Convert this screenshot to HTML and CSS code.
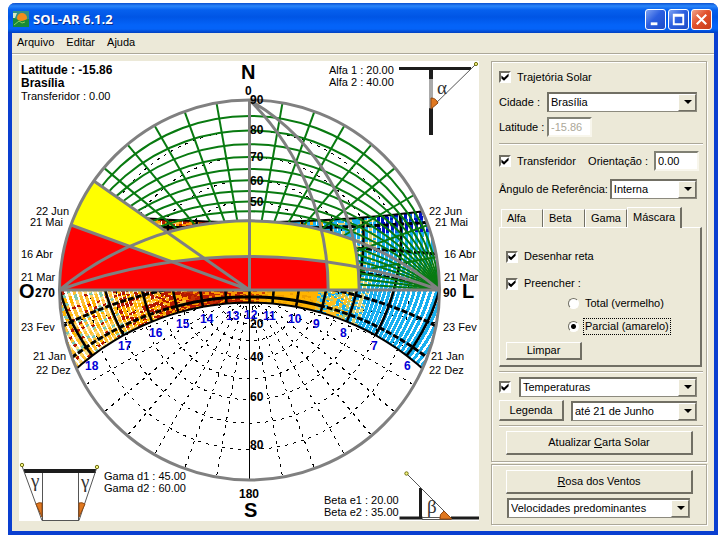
FILE: index.html
```html
<!DOCTYPE html>
<html lang="pt-BR">
<head>
<meta charset="utf-8">
<title>SOL-AR 6.1.2</title>
<link rel="stylesheet" href="styles.css">
</head>
<body>
<div class="window">
  <header class="titlebar">
    <svg class="app-icon" viewBox="0 0 16 16" aria-hidden="true">
      <rect width="16" height="16" fill="#2f8f86"/>
      <path d="M0 2h4l-2 5H0z" fill="#d8e8c0"/>
      <circle cx="9" cy="7" r="5" fill="#f08c1c"/>
      <path d="M0 7c4 0 5 3 8 3s5-2 8-2v8H0z" fill="#188a38"/>
      <path d="M1 14l5-4 3 2 3-1" stroke="#8ad060" fill="none"/>
    </svg>
    <h1>SOL-AR 6.1.2</h1>
    <div class="window-buttons">
      <button type="button" class="win-btn" aria-label="Minimizar"><svg viewBox="0 0 20 20"><path d="M5 13h7v3H5z" fill="#fff"/></svg></button>
      <button type="button" class="win-btn" aria-label="Maximizar"><svg viewBox="0 0 20 20"><path d="M4 4h12v12H4zM6 7v7h8V7z" fill="#fff" fill-rule="evenodd"/></svg></button>
      <button type="button" class="win-btn close" aria-label="Fechar"><svg viewBox="0 0 20 20"><path d="M5 5l10 10M15 5L5 15" stroke="#fff" stroke-width="2.2"/></svg></button>
    </div>
  </header>
  <nav class="menubar">
    <button type="button">Arquivo</button>
    <button type="button">Editar</button>
    <button type="button">Ajuda</button>
  </nav>
  <main class="content">
    <svg class="chart" viewBox="19 61 460 460" role="img" aria-label="Carta solar de Brasília">
      <defs>
        <clipPath id="disc"><circle cx="249.5" cy="290" r="190"/></clipPath>
        <clipPath id="upper"><path d="M59.5 290A190 190 0 0 1 439.5 290z"/></clipPath>
        <clipPath id="gamma60"><circle cx="139.8" cy="290" r="219.4"/></clipPath>
        <clipPath id="gamma45"><circle cx="59.5" cy="290" r="268.7"/></clipPath>
      </defs>
      <rect x="19" y="61" width="460" height="460" fill="#fff"/>
      <g id="polar-grid" class="polar-grid" clip-path="url(#disc)"></g>
      <g id="temperatures" clip-path="url(#disc)"></g>
      <g id="sun-paths" class="sun-paths" clip-path="url(#disc)"></g>
      <g id="protractor" class="protractor" clip-path="url(#upper)"></g>
      <g fill="#ff0">
        <path d="M59.5 290A295.6 295.6 0 0 1 439.5 290z" clip-path="url(#gamma60)"/>
        <path d="M249.5 290H59.5A190 190 0 0 1 93.9 181z"/>
      </g>
      <g fill="#f00">
        <path d="M59.5 290A555.5 555.5 0 0 1 439.5 290z" clip-path="url(#gamma45)"/>
        <path d="M249.5 290H59.5A190 190 0 0 1 71 225z"/>
      </g>
      <path d="M249.5 290V480" stroke="#000"/>
      <g class="guides">
        <path d="M59.5 290A295.6 295.6 0 0 1 439.5 290M59.5 290A555.5 555.5 0 0 1 439.5 290"/>
        <path d="M249.5 100A219.4 219.4 0 0 1 359.2 290M249.5 100A268.7 268.7 0 0 1 328.2 290"/>
        <path d="M249.5 290L93.9 181M249.5 290L71 225M59.5 290H439.5M249.5 100V290"/>
        <circle cx="249.5" cy="290" r="190"/>
      </g>
      <g class="scale">
        <text x="250" y="104">90</text><text x="250" y="134">80</text><text x="250" y="161">70</text>
        <text x="250" y="185">60</text><text x="250" y="206">50</text>
        <text x="250" y="328">20</text><text x="250" y="361">40</text><text x="250" y="401">60</text><text x="250" y="449">80</text>
        <text x="245" y="95">0</text><text x="239" y="498">180</text>
        <text x="35" y="297">270</text><text x="443" y="297">90</text>
      </g>
      <g class="cardinal">
        <text x="241" y="79">N</text><text x="244" y="517">S</text><text x="19" y="298">O</text><text x="462" y="298">L</text>
      </g>
      <g class="hours">
        <text x="85" y="370">18</text><text x="118" y="350">17</text><text x="149" y="337">16</text><text x="176" y="328">15</text>
        <text x="200" y="323">14</text><text x="226" y="320">13</text><text x="244" y="319">12</text><text x="263" y="320">11</text>
        <text x="288" y="323">10</text><text x="313" y="328">9</text><text x="340" y="337">8</text><text x="371" y="350">7</text><text x="404" y="370">6</text>
      </g>
      <g class="note">
        <text x="36" y="215">22 Jun</text><text x="30" y="226">21 Mai</text><text x="21" y="258">16 Abr</text><text x="21" y="281">21 Mar</text>
        <text x="21" y="331">23 Fev</text><text x="33" y="360">21 Jan</text><text x="36" y="374">22 Dez</text>
        <text x="429" y="215">22 Jun</text><text x="435" y="226">21 Mai</text><text x="444" y="258">16 Abr</text><text x="444" y="281">21 Mar</text>
        <text x="443" y="331">23 Fev</text><text x="431" y="360">21 Jan</text><text x="429" y="374">22 Dez</text>
        <text x="21" y="100">Transferidor : 0.00</text>
        <text x="329" y="74">Alfa 1 : 20.00</text><text x="329" y="86">Alfa 2 : 40.00</text>
        <text x="104" y="480">Gama d1 : 45.00</text><text x="104" y="492">Gama d2 : 60.00</text>
        <text x="324" y="504">Beta e1 : 20.00</text><text x="324" y="516">Beta e2 : 35.00</text>
      </g>
      <g class="heading"><text x="21" y="74">Latitude : -15.86</text><text x="21" y="87">Brasília</text></g>
      <g class="diagram">
        <path class="slab" d="M399 67h72v3h-72zM429 68h4v11h-4zM429 108h4v27h-4z"/>
        <path class="wire" d="M430 79v30M432 79v30M431 108L475 65"/>
        <path class="angle" d="M431 98q5 0 7 5l-7 6z"/>
        <circle class="sun" cx="476" cy="64" r="1.6"/>
        <text x="437" y="94">α</text>
      </g>
      <g class="diagram">
        <path class="slab" d="M24 469h72v4H24z"/>
        <path class="wire" d="M22 466L42 520.5H79L97 467M42.5 473v47M78.5 473v47"/>
        <path class="angle" d="M36 504q3-2 6-1v14zM79 503q3-1 6 1l-6 13z"/>
        <circle class="sun" cx="22" cy="465" r="1.7"/><circle class="sun" cx="97" cy="467" r="1.7"/>
        <text x="31" y="487">γ</text><text x="81" y="488">γ</text>
      </g>
      <g class="diagram">
        <path class="slab" d="M399.5 516.5h23v3h-23zM451 516.5h28v3h-28zM419 488h3v31h-3z"/>
        <path class="wire" d="M422 517.5h29M422 519.5h29M407 474L452 519"/>
        <path class="angle" d="M440 519q-1-5 4-8l8 8z"/>
        <circle class="sun" cx="406.5" cy="473.5" r="1.7"/>
        <text x="427" y="513">β</text>
      </g>
    </svg>

    <form class="panel">
      <section class="group">
        <label class="row check-row"><input type="checkbox" checked> Trajetória Solar</label>
        <div class="row city-row">
          <label class="caption" for="city">Cidade :</label>
          <span class="combo grow"><select id="city"><option>Brasília</option></select></span>
        </div>
        <div class="row">
          <label class="caption" for="lat">Latitude :</label>
          <input class="field" id="lat" type="text" value="-15.86" disabled>
        </div>
        <hr>
        <div class="row spread">
          <label class="check-row"><input type="checkbox" checked> Transferidor</label>
          <span class="pair"><label for="ori">Orientação :</label><input class="field" id="ori" type="text" value="0.00"></span>
        </div>
        <div class="row angle-row">
          <label for="ref">Ângulo de Referência:</label>
          <span class="combo grow"><select id="ref"><option>Interna</option></select></span>
        </div>
        <div class="tabs" role="tablist">
          <button type="button" role="tab">Alfa</button>
          <button type="button" role="tab">Beta</button>
          <button type="button" role="tab">Gama</button>
          <button type="button" role="tab" aria-selected="true" class="active">Máscara</button>
        </div>
        <div class="tab-page" role="tabpanel">
          <label class="check-row"><input type="checkbox" checked> Desenhar reta</label>
          <label class="check-row"><input type="checkbox" checked> Preencher :</label>
          <div class="options">
            <label><input type="radio" name="fill"><span>Total (vermelho)</span></label>
            <label><input type="radio" name="fill" checked><span class="focused">Parcial (amarelo)</span></label>
          </div>
          <button type="button" class="btn small">Limpar</button>
        </div>
        <hr class="tight">
        <div class="row temp-row">
          <input type="checkbox" id="temp-on" aria-label="Mostrar dados" checked>
          <span class="combo grow"><select aria-label="Dados"><option>Temperaturas</option></select></span>
        </div>
        <div class="row legend-row">
          <button type="button" class="btn legend">Legenda</button>
          <span class="combo grow"><select aria-label="Período"><option>até 21 de Junho</option></select></span>
        </div>
        <hr class="tight">
        <button type="button" class="btn wide">Atualizar <u>C</u>arta Solar</button>
      </section>
      <section class="group">
        <button type="button" class="btn wide"><u>R</u>osa dos Ventos</button>
        <span class="combo wind"><select aria-label="Ventos"><option>Velocidades predominantes</option></select></span>
      </section>
    </form>
  </main>
</div>
<script src="chart.js"></script>
</body>
</html>
```
FILE: styles.css
```css
* { box-sizing: border-box; }
body {
  margin: 0;
  padding: 3px 7px 4px 8px;
  background: #fff;
  color: #000;
  font: 11px/13px "Liberation Sans", Arial, sans-serif;
}
button, input, select { font: inherit; color: inherit; margin: 0; padding: 0; border-radius: 0; }
.window {
  background: #ece9d8;
  border: solid #0a3fd0;
  border-width: 0 4px 4px;
  border-radius: 7px 7px 0 0;
}
.titlebar {
  display: flex;
  align-items: center;
  gap: 4px;
  height: 30px;
  margin: 0 -4px;
  padding: 2px 6px 0 5px;
  border-radius: 7px 7px 0 0;
  background: linear-gradient(#0a50d0 0, #2a86fa 3px, #0660ee 7px, #0055e5 14px, #0463f8 22px, #0463f8 26px, #0140c0 30px);
}
.app-icon { width: 16px; height: 16px; }
h1 {
  flex: 1;
  margin: 0;
  color: #fff;
  font: bold 13px/16px "Open Sans", sans-serif;
  text-shadow: 1px 1px #0a2c8c;
}
.window-buttons { display: flex; gap: 2px; }
.win-btn {
  width: 21px;
  height: 21px;
  border: 1px solid #fff;
  border-radius: 3px;
  background: linear-gradient(135deg, #7ea2f2, #2c5fe0 45%, #1c4cc8);
}
.win-btn svg { display: block; width: 100%; height: 100%; }
.close { background: linear-gradient(135deg, #f0a48c, #e2512c 45%, #c83c18); }
.menubar {
  display: flex;
  gap: 12px;
  height: 21px;
  padding: 0 5px 2px;
  border-bottom: 1px solid #aca899;
  box-shadow: 0 1px #fff;
}
.menubar button { border: 0; background: none; }
.content {
  display: flex;
  align-items: flex-start;
  gap: 12px;
  padding: 7px 7px 6px;
}
.chart { flex: 1; min-width: 0; display: block; }

/* Chart */
.polar-grid { fill: none; stroke: #000; stroke-width: 1; stroke-dasharray: 3 5; shape-rendering: crispEdges; }
.sun-paths { fill: none; stroke: #000; stroke-width: 2; }
.sun-paths .day { stroke-width: 3; stroke-dasharray: 6 2; }
.sun-paths .noon-side { stroke-dasharray: none; }
.sun-paths .edge { stroke-width: 2; stroke-dasharray: none; }
.protractor { fill: none; stroke: #087a10; stroke-width: 2; }
.guides { fill: none; stroke: #808080; stroke-width: 3; }
.scale { font-size: 12px; font-weight: bold; }
.cardinal { font-size: 20px; font-weight: bold; }
.hours { font-size: 12px; font-weight: bold; fill: #0000d8; }
.note { font-size: 11px; }
.heading { font-size: 12px; font-weight: bold; }
.slab { fill: #1c1c1c; }
.wire { fill: none; stroke: #555; stroke-width: 1; }
.angle { fill: #e07820; stroke: #904810; stroke-width: 1; }
.sun { fill: #f4f480; stroke: #707010; stroke-width: 1; }
.diagram text { font: 19px "Liberation Serif", serif; fill: #333; }

/* Side panel */
.panel { width: 216px; flex: none; }
.group {
  border: 1px solid #aca899;
  box-shadow: inset 1px 1px #fff, 1px 1px #fff;
  padding: 5px 7px 6px;
}
.group + .group { margin-top: 2px; }
.row { display: flex; align-items: center; min-height: 20px; margin-bottom: 5px; }
.check-row { display: flex; align-items: center; gap: 6px; }
.city-row { padding-right: 2px; margin-top: 3px; }
.caption { width: 48px; }
.grow { flex: 1; }
.spread { justify-content: space-between; margin-top: 6px; }
.pair { display: flex; align-items: center; gap: 6px; }
.angle-row { gap: 2px; padding-right: 2px; margin-top: 8px; }
hr {
  height: 2px;
  margin: 6px -4px 0 0;
  border: 0;
  border-top: 1px solid #aca899;
  border-bottom: 1px solid #fff;
}
hr.tight { margin: 4px -4px 4px 0; }
input[type="checkbox"] {
  appearance: none;
  flex: none;
  width: 12px;
  height: 12px;
  background: #fff;
  border: 2px solid;
  border-color: #716f64 #fff #fff #716f64;
}
input[type="checkbox"]:checked::before {
  content: "";
  display: block;
  width: 8px;
  height: 8px;
  background: #000;
  clip-path: polygon(5% 30%, 38% 60%, 95% 5%, 95% 42%, 38% 98%, 5% 68%);
}
.field {
  width: 45px;
  height: 20px;
  padding: 0 2px;
  background: #fff;
  border: 2px solid;
  border-color: #808074 #f8f6ec #f8f6ec #808074;
}
.field:disabled { color: #aca899; }
.combo {
  display: flex;
  position: relative;
  height: 20px;
  background: #fff;
  border: 2px solid;
  border-color: #716f64 #8c8a7e #8c8a7e #716f64;
  border-right-width: 1px;
  border-bottom-width: 1px;
}
.combo select {
  appearance: none;
  flex: 1;
  min-width: 0;
  border: 0;
  background: none;
  padding: 0 17px 0 2px;
}
.combo::before {
  content: "";
  position: absolute;
  inset: 0 0 0 auto;
  width: 16px;
  background: #ece9d8;
  border: 1px solid;
  border-color: #fff #716f64 #716f64 #fff;
}
.combo::after {
  content: "";
  position: absolute;
  right: 4px;
  top: 6px;
  border: 4px solid transparent;
  border-top-color: #000;
  border-bottom: 0;
}
.tabs { display: flex; align-items: flex-end; height: 20px; margin: 8px 0 0 2px; }
.tabs button {
  height: 18px;
  padding: 0 9px 0 5px;
  width: 42px;
  text-align: left;
  background: none;
  border: solid;
  border-width: 1px 1px 0;
  border-color: #fff #716f64 #fff #fff;
}
.tabs .active {
  position: relative;
  z-index: 1;
  width: 55px;
  height: 21px;
  margin-bottom: -1px;
  padding: 0 5px 2px;
  background: #ece9d8;
  border-right-width: 2px;
}
.tab-page {
  display: flex;
  flex-direction: column;
  gap: 14px;
  margin-right: -3px;
  min-height: 140px;
  padding: 22px 6px 5px;
  border: solid;
  border-width: 1px 2px 2px 1px;
  border-color: #fff #716f64 #716f64 #fff;
}
.options { display: flex; flex-direction: column; gap: 8px; margin: -8px 0 0 62px; }
.options label { display: flex; align-items: center; gap: 5px; }
.options span { padding: 1px; }
.options .focused { outline: 1px dotted #000; }
input[type="radio"] {
  appearance: none;
  flex: none;
  width: 11px;
  height: 11px;
  border-radius: 50%;
  background: #fff;
  border: 1px solid;
  border-color: #716f64 #fff #fff #716f64;
}
input[type="radio"]:checked { background: radial-gradient(circle, #000 2px, #fff 3px); }
.btn {
  background: #ece9d8;
  border: solid;
  border-width: 1px 2px 2px 1px;
  border-color: #fff #716f64 #716f64 #fff;
}
.small { width: 76px; height: 18px; margin-top: -6px; flex: none; }
.temp-row { gap: 8px; padding-right: 2px; margin-bottom: 3px; }
.legend-row { gap: 7px; padding-right: 2px; margin-bottom: 0; }
.legend { width: 65px; height: 21px; }
.wide { display: block; width: calc(100% - 13px); height: 24px; margin-left: 7px; }
.wind { margin: 4px 9px 0 8px; }
```
FILE: chart.js
```js
// Stereographic sun chart: horizon radius R around the zenith (CX, CY).
const CX = 249.5, CY = 290, R = 190, RAD = Math.PI / 180;
const LAT = -15.86 * RAD, TILT = 23.45;

function addPath(parent, d, attrs) {
  const el = document.createElementNS("http://www.w3.org/2000/svg", "path");
  el.setAttribute("d", d);
  for (const key in attrs || {}) el.setAttribute(key, attrs[key]);
  document.getElementById(parent).appendChild(el);
}

// Screen point of the sun for an hour angle and declination in degrees.
function sun(hour, dec) {
  const h = hour * RAD, d = dec * RAD;
  const up = Math.sin(LAT) * Math.sin(d) + Math.cos(LAT) * Math.cos(d) * Math.cos(h);
  const north = Math.cos(LAT) * Math.sin(d) - Math.sin(LAT) * Math.cos(d) * Math.cos(h);
  const east = -Math.cos(d) * Math.sin(h);
  return (CX + R * east / (1 + up)).toFixed(1) + " " + (CY - R * north / (1 + up)).toFixed(1);
}

for (let z = 10; z < 90; z += 10) {
  const r = R * Math.tan(z * RAD / 2);
  addPath("polar-grid", `M${CX - r} ${CY}a${r} ${r} 0 0 1 ${2 * r} 0a${r} ${r} 0 0 1 ${-2 * r} 0`);
}
for (let a = 10; a < 360; a += 10) {
  if (a % 90) {
    const s = Math.sin(a * RAD), c = Math.cos(a * RAD);
    addPath("polar-grid", `M${CX + 17 * s} ${CY - 17 * c}L${CX + R * s} ${CY - R * c}`);
    if (c > 0) addPath("protractor", `M${CX} ${CY}L${CX + R * s} ${CY - R * c}`);
  }
}
for (let a = 5; a < 90; a += 5) {
  const r = R / Math.sin(a * RAD);
  addPath("protractor", `M${CX - R} ${CY}A${r} ${r} 0 0 1 ${CX + R} ${CY}`);
}

// Temperature cells: the palette depends on the time of day and the season.
let seed = 7;
function random() {
  seed = (seed * 16807) % 2147483647;
  return seed / 2147483647;
}
function palette(h, dec) {
  if (h > 72) return ["#b41800", "#ffc030", "#ffe080", "#ffd060", "#ffb400", "#ffc030", "#80c8a8"];
  if (h > 55) return ["#b41800", "#ffb400", "#ffd060", "#b41800", "#ffb400"];
  if (h > 40) return ["#b41800", "#ffa800", "#ffa800", "#b41800", "#ffc040"];
  if (h > 5) return ["#b41800", "#b41800", "#c83000", "#ff9800"];
  if (h > -10) return ["#d04000", "#ffa800", "#ffa800"];
  if (h > -42) return dec > 15 ? ["#18b0f0", "#18b0f0", "#ffb400"] : ["#ffb400", "#ffb400", "#ffb400", "#f0a000"];
  if (h > -58) return dec > 0 ? ["#18b0f0", "#18b0f0", "#18b0f0", "#d8d070"] : ["#ffc020", "#ffc020", "#a8c880", "#18b0f0"];
  if (h > -66) return ["#18b0f0", "#18b0f0", "#d8d070"];
  return dec > 17 ? ["#0010c8", "#0010c8", "#1060e0"] : ["#18b0f0"];
}
const cells = {};
for (let h = -98; h <= 98; h += 1.75) {
  for (let d = -TILT; d < TILT; d += 0.9) {
    const colors = palette(h, d);
    const color = colors[Math.floor(random() * colors.length)];
    cells[color] = (cells[color] || "") + `M${sun(h, d)}L${sun(h, Math.min(d + 1, TILT))}`;
  }
}
for (const color in cells) {
  addPath("temperatures", cells[color], { stroke: color, "stroke-width": 3.2, "shape-rendering": "crispEdges" });
}

function track(points) { return "M" + points.join("L"); }
for (let h = -90; h <= 90; h += 15) {
  const pts = [];
  for (let i = 0; i <= 20; i++) pts.push(sun(h, -TILT + i * TILT / 10));
  addPath("sun-paths", track(pts), { "stroke-width": 2.6 });
}
for (const d of [-TILT, -20, -10.5, 0, 10.5, 20, TILT]) {
  const edge = Math.abs(d) === TILT;
  for (const [from, to] of [[-100, -45], [-45, 45], [45, 100]]) {
    const pts = [];
    for (let h = from; h <= to; h += 5) pts.push(sun(h, d));
    const cls = edge ? "edge" : from === -45 ? "day noon-side" : "day";
    addPath("sun-paths", track(pts), { class: cls });
  }
}
```
